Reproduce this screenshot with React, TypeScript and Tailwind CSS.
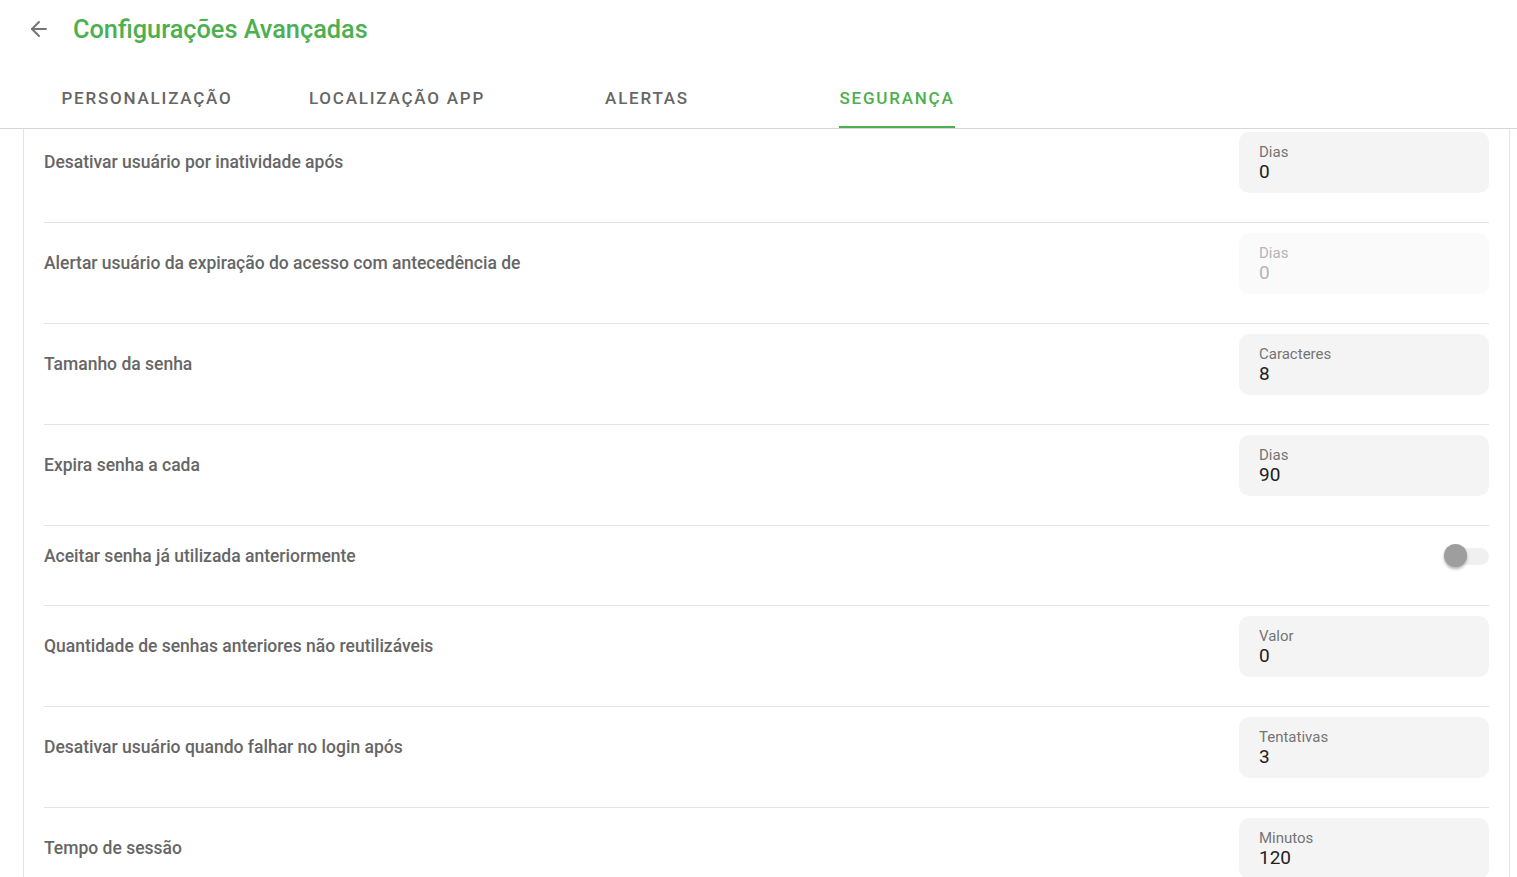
import { useEffect, useRef } from 'react';
import { ArrowLeft } from 'lucide-react';

type Row =
  | { kind: 'input'; label: string; field: string; value: string; disabled?: boolean }
  | { kind: 'toggle'; label: string };

const rows: Row[] = [
  { kind: 'input', label: 'Desativar usuário por inatividade após', field: 'Dias', value: '0' },
  { kind: 'input', label: 'Alertar usuário da expiração do acesso com antecedência de', field: 'Dias', value: '0', disabled: true },
  { kind: 'input', label: 'Tamanho da senha', field: 'Caracteres', value: '8' },
  { kind: 'input', label: 'Expira senha a cada', field: 'Dias', value: '90' },
  { kind: 'toggle', label: 'Aceitar senha já utilizada anteriormente' },
  { kind: 'input', label: 'Quantidade de senhas anteriores não reutilizáveis', field: 'Valor', value: '0' },
  { kind: 'input', label: 'Desativar usuário quando falhar no login após', field: 'Tentativas', value: '3' },
  { kind: 'input', label: 'Tempo de sessão', field: 'Minutos', value: '120' },
  { kind: 'input', label: 'Bloquear acesso simultâneo', field: 'Sessões', value: '1' },
];

const tabs = ['PERSONALIZAÇÃO', 'LOCALIZAÇÃO APP', 'ALERTAS', 'SEGURANÇA'];

const Field = ({ field, value, disabled }: { field: string; value: string; disabled?: boolean }) => (
  <div
    className={`w-[250px] h-[61px] rounded-[10px] px-5 pt-[11px] ${disabled ? 'bg-[#fafafa]' : 'bg-[#f4f4f4]'}`}
  >
    <div className={`text-[15px] leading-[18px] ${disabled ? 'text-[#b5b5b5]' : 'text-[#747474]'}`}>{field}</div>
    <div className={`text-[19px] leading-[21px] ${disabled ? 'text-[#b5b5b5]' : 'text-[#212121]'}`}>{value}</div>
  </div>
);

const Toggle = () => (
  <div className="relative w-[46px] h-[24px] flex items-center">
    <div className="ml-[8px] w-[38px] h-[17px] rounded-full bg-[#f0f0f0]" />
    <div className="absolute left-[1px] top-0 w-[23px] h-[23px] rounded-full bg-[#9e9e9e] shadow-[0_2px_3px_rgba(0,0,0,0.3)]" />
  </div>
);

export default function App() {
  const scrollRef = useRef<HTMLDivElement>(null);

  useEffect(() => {
    if (scrollRef.current) scrollRef.current.scrollTop = 7;
  }, []);

  return (
    <div className="h-[877px] flex flex-col bg-white overflow-hidden" style={{ fontFamily: 'Roboto, "Liberation Sans", sans-serif' }}>
      <div className="h-[68px] flex items-start pt-[17px] pl-[27px]">
        <ArrowLeft className="w-6 h-6 text-[#757575]" strokeWidth={2} />
        <h1 className="ml-[22px] text-[25.3px] leading-[26px] font-medium text-[#4caf50]">Configurações Avançadas</h1>
      </div>

      <div className="h-[61px] flex pl-[22px] border-b border-[#d6d6d6]">
        {tabs.map((t) => {
          const active = t === 'SEGURANÇA';
          return (
            <div key={t} className="w-[250px] flex justify-center">
              <div
                className={`h-full flex items-center pt-[4px] text-[17px] font-medium tracking-[0.105em] border-b-2 ${
                  active ? 'text-[#4caf50] border-[#4caf50]' : 'text-[#666666] border-transparent'
                }`}
              >
                {t}
              </div>
            </div>
          );
        })}
      </div>

      <div ref={scrollRef} className="flex-1 overflow-hidden ml-[23px] mr-[7px] border-x border-[#e4e4e8]">
        <div className="px-5">
          {rows.map((r, i) =>
            r.kind === 'input' ? (
              <div key={i} className="flex justify-between pt-[10px] pb-[29px] border-b border-[#e4e4e8]">
                <div className="h-[61px] flex items-center text-[17.5px] font-medium text-[#666666]">{r.label}</div>
                <Field field={r.field} value={r.value} disabled={r.disabled} />
              </div>
            ) : (
              <div key={i} className="h-[80px] flex justify-between items-start pt-[18px] border-b border-[#e4e4e8]">
                <div className="h-[24px] flex items-center text-[17.5px] font-medium text-[#666666]">{r.label}</div>
                <Toggle />
              </div>
            )
          )}
        </div>
      </div>
    </div>
  );
}
